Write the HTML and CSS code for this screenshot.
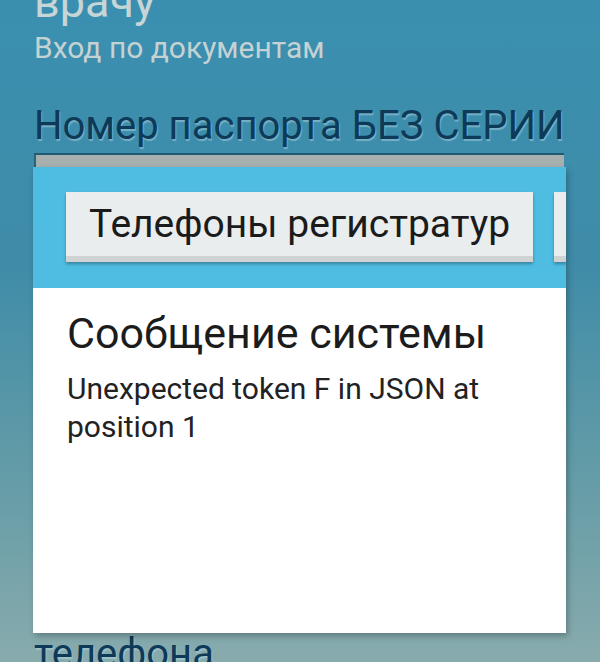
FILE: index.html
```html
<!DOCTYPE html>
<html lang="ru">
<head>
  <meta charset="UTF-8" />
  <meta name="viewport" content="width=device-width, initial-scale=1.0"/>
  <title>Запись к врачу</title>
  <link rel="stylesheet" href="styles.css">
</head>
<body>

  <div class="screen">
    <div class="form">
      <h1 class="title">врачу</h1>
      <p class="subtitle">Вход по документам</p>

      <label class="field-label">Номер паспорта БЕЗ СЕРИИ</label>
      <div class="field"></div>

      <label class="field-label phone-label">телефона</label>
    </div>

    <!-- Message dialog -->
    <div class="dialog">
      <div class="dialog-bar">
        <button class="bar-btn">Телефоны регистратур</button>
        <button class="bar-btn">Войти</button>
      </div>
      <div class="dialog-body">
        <h2>Сообщение системы</h2>
        <p>Unexpected token F in JSON at position 1</p>
      </div>
    </div>
  </div>

</body>
</html>
```

FILE: styles.css
```css
* {
  box-sizing: border-box;
  font-family: Roboto, "Noto Sans", sans-serif;
}

body {
  margin: 0;
  padding: 0;
  overflow: hidden;
}

.screen {
  position: relative;
  width: 600px;
  height: 662px;
  overflow: hidden;
  background: linear-gradient(180deg, #3a8fb0 0%, #3f8ca8 40%, #649ca7 72%, #88abad 100%);
}

.form {
  padding: 0 36px 0 34px;
}

.title {
  margin: -24px 0 0;
  font-size: 45px;
  font-weight: 400;
  line-height: 52px;
  color: #c8d5d6;
}

.subtitle {
  margin: 2px 0 0;
  font-size: 30px;
  line-height: 36px;
  color: #c5d2d3;
}

.field-label {
  display: block;
  margin-top: 38px;
  font-size: 40px;
  line-height: 44px;
  color: #0d3a58;
  white-space: nowrap;
  text-shadow: 1px 2px 1px rgba(190, 220, 230, 0.45);
}

.field {
  height: 56px;
  margin-top: 5px;
  background: #a7afaf;
  border-top: 2px solid #1f5a72;
  border-left: 2px solid #2a6379;
}

.phone-label {
  margin-top: 423px;
}

.dialog {
  position: absolute;
  top: 167px;
  left: 33px;
  width: 533px;
  height: 466px;
  background: white;
  box-shadow: 2px 3px 6px rgba(0, 0, 0, 0.25);
  display: flex;
  flex-direction: column;
  overflow: hidden;
}

.dialog-bar {
  height: 121px;
  background: #4fbde1;
  display: flex;
  gap: 21px;
  padding: 25px 0 0 33px;
  flex-shrink: 0;
}

.bar-btn {
  height: 70px;
  padding: 0 23px;
  background: #e9eded;
  border: none;
  border-bottom: 6px solid #cfd3d3;
  box-shadow: 0 2px 3px rgba(0, 0, 0, 0.3);
  font-size: 39px;
  color: #1b1b1b;
  white-space: nowrap;
  flex-shrink: 0;
}

.dialog-body {
  padding: 20px 34px;
}

.dialog-body h2 {
  margin: 0;
  font-size: 43px;
  font-weight: 400;
  line-height: 50px;
  color: #1c1c1c;
}

.dialog-body p {
  margin: 12px 0 0;
  font-size: 30px;
  line-height: 38px;
  color: #222;
  width: 430px;
}
```
